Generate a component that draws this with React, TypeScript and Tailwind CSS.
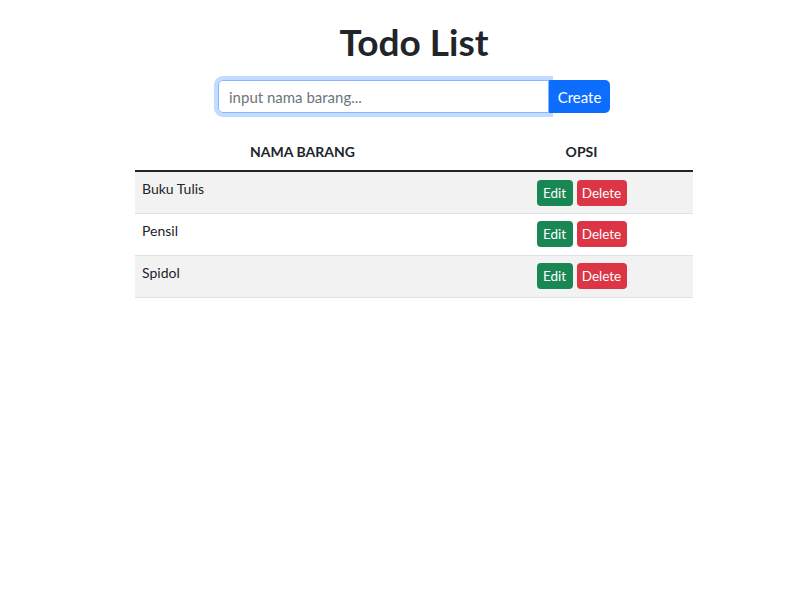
import React, { useState } from 'react';

interface Item {
  id: number;
  name: string;
}

const initialItems: Item[] = [
  { id: 1, name: 'Buku Tulis' },
  { id: 2, name: 'Pensil' },
  { id: 3, name: 'Spidol' },
];

export default function App() {
  const [items] = useState<Item[]>(initialItems);
  const [text, setText] = useState('');

  return (
    <div className="min-h-screen bg-white pl-[28px] text-[#212529] font-['Lato','Noto_Sans',sans-serif]">
      <div className="mx-auto w-[558px] pt-[20px]">
        <h1 className="text-center text-[37px] font-bold leading-[1.2] text-[#212529]">Todo List</h1>

        <div className="mt-[16px] flex justify-center">
          <input
            value={text}
            onChange={(e) => setText(e.target.value)}
            placeholder="input nama barang..."
            className="h-[33px] w-[331px] rounded-l-[5px] border border-[#86b7fe] px-[10px] text-[15px] text-[#212529] placeholder:text-[#6c757d] outline-none shadow-[0_0_0_4px_rgba(13,110,253,0.25)]"
          />
          <button className="h-[33px] w-[61px] rounded-r-[5px] bg-[#0d6efd] text-[15px] text-white">Create</button>
        </div>

        <table className="mt-[20px] w-full border-collapse text-[14px]">
          <thead>
            <tr className="border-b-2 border-[#212529]">
              <th className="w-[335px] pt-[8px] pb-[8px] text-center text-[14px] font-bold">NAMA BARANG</th>
              <th className="pt-[8px] pb-[8px] text-center text-[14px] font-bold">OPSI</th>
            </tr>
          </thead>
          <tbody>
            {items.map((item, index) => (
              <tr key={item.id} className={`border-b border-[#dee2e6] ${index % 2 === 0 ? 'bg-[#f2f2f2]' : 'bg-white'}`}>
                <td className="h-[42px] px-[7px] pt-[6px] align-top">{item.name}</td>
                <td className="py-[7px] text-center">
                  <div className="flex justify-center gap-[4px]">
                    <button className="h-[26px] w-[36px] rounded-[4px] bg-[#198754] text-[13.5px] text-white">Edit</button>
                    <button className="h-[26px] w-[50px] rounded-[4px] bg-[#dc3545] text-[13.5px] text-white">Delete</button>
                  </div>
                </td>
              </tr>
            ))}
          </tbody>
        </table>
      </div>
    </div>
  );
}
